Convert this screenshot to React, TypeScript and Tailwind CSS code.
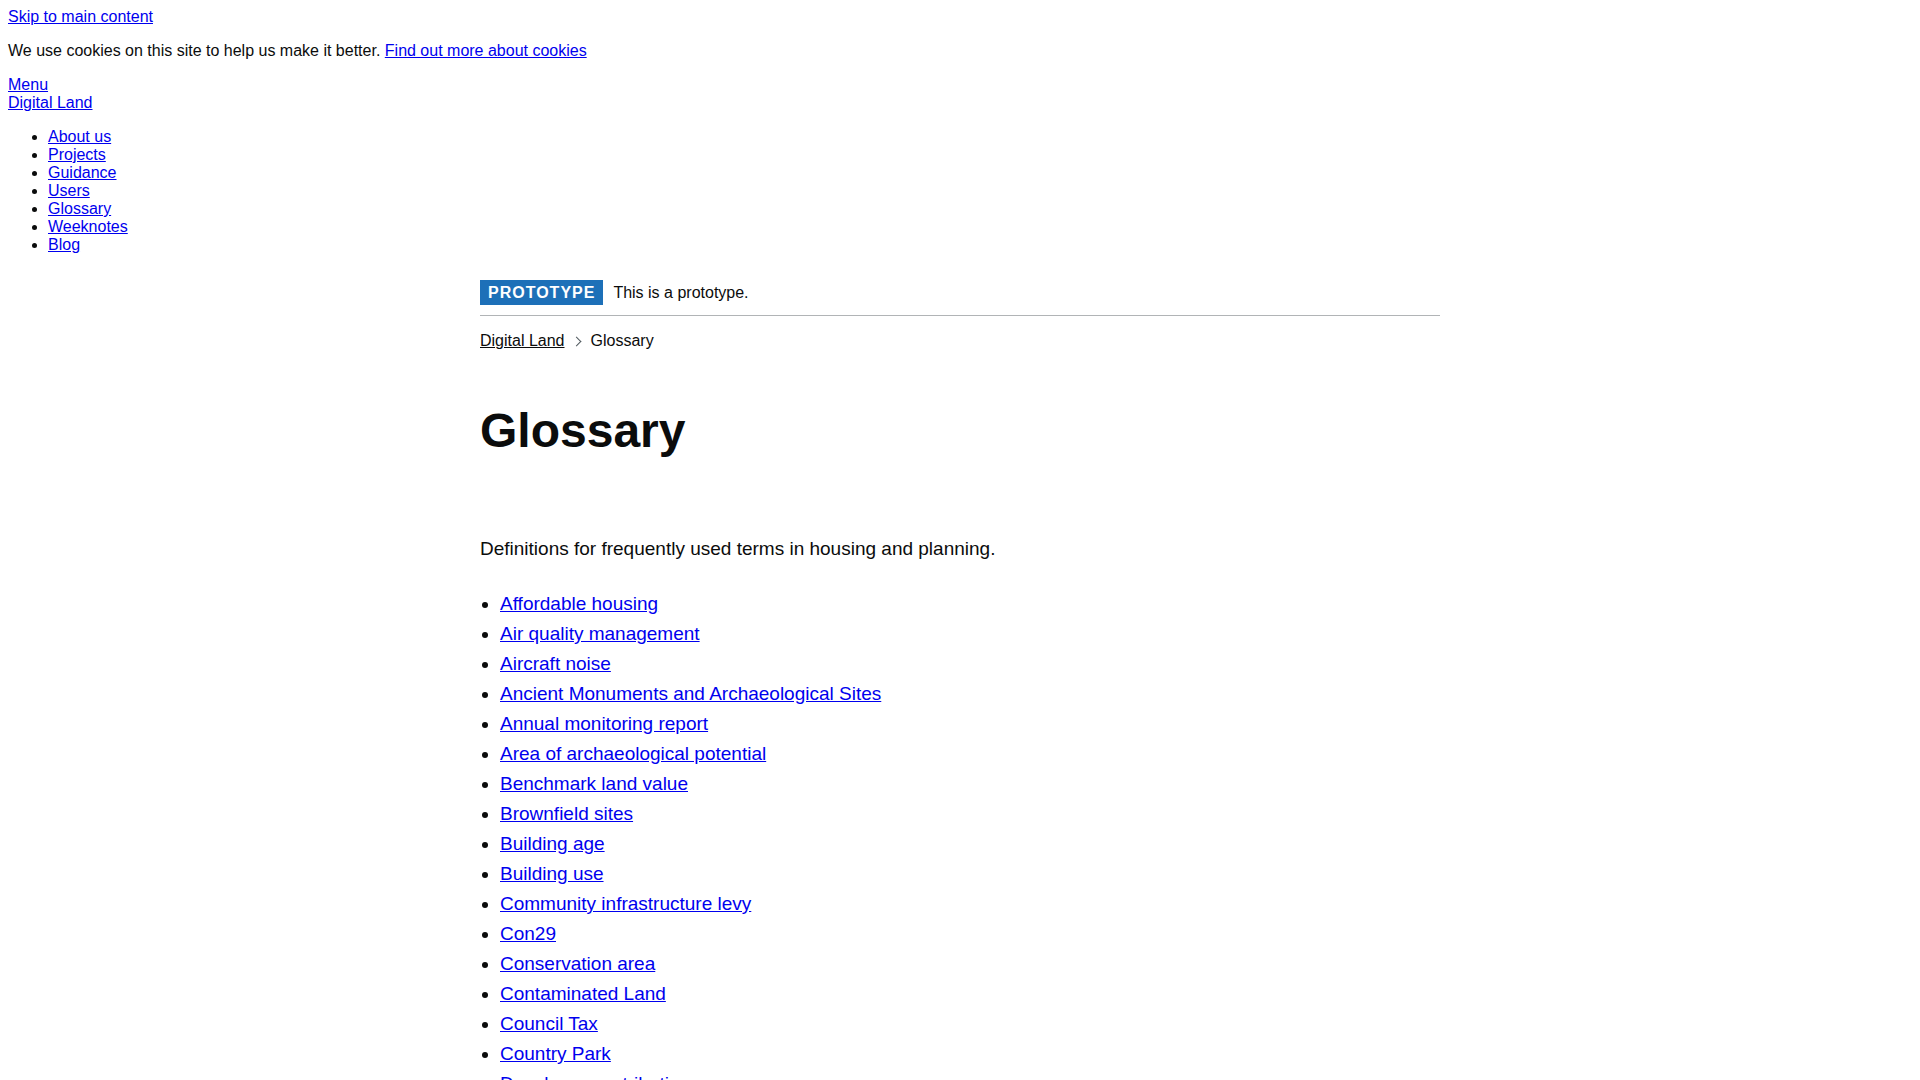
import React from "react";

const navLinks = ["About us", "Projects", "Guidance", "Users", "Glossary", "Weeknotes", "Blog"];

const terms = [
  "Affordable housing",
  "Air quality management",
  "Aircraft noise",
  "Ancient Monuments and Archaeological Sites",
  "Annual monitoring report",
  "Area of archaeological potential",
  "Benchmark land value",
  "Brownfield sites",
  "Building age",
  "Building use",
  "Community infrastructure levy",
  "Con29",
  "Conservation area",
  "Contaminated Land",
  "Council Tax",
  "Country Park",
  "Developer contributions",
  "Development plan",
  "Flood risk zone",
  "Green belt",
];

export default function App() {
  return (
    <div className="min-h-screen bg-white p-2 text-[16px] leading-[18px] text-[#0b0c0c] font-['Liberation_Sans',Arial,sans-serif]">
      {/* Unstyled header bits */}
      <a href="#main" className="text-[#0000ee] underline">
        Skip to main content
      </a>
      <p className="my-4">
        We use cookies on this site to help us make it better.{" "}
        <a href="#cookies" className="text-[#0000ee] underline">
          Find out more about cookies
        </a>
      </p>
      <div>
        <a href="#menu" className="text-[#0000ee] underline">Menu</a>
      </div>
      <div>
        <a href="#home" className="text-[#0000ee] underline">Digital Land</a>
      </div>
      <ul className="my-4 list-disc pl-10">
        {navLinks.map((l) => (
          <li key={l}>
            <a href="#" className="text-[#0000ee] underline">{l}</a>
          </li>
        ))}
      </ul>

      <div className="mx-auto max-w-[960px]">
        {/* Phase banner */}
        <div className="flex items-center border-b border-[#b1b4b6] py-[10px]">
          <strong className="mr-[10px] inline-block bg-[#1d70b8] px-2 pt-[5px] pb-[4px] text-[16px] leading-4 font-bold uppercase tracking-[1px] text-white">
            Prototype
          </strong>
          <span className="leading-5">This is a prototype.</span>
        </div>

        {/* Breadcrumbs */}
        <div className="mt-[15px] flex items-center leading-5">
          <a href="#home" className="text-[#0b0c0c] underline">Digital Land</a>
          <span className="ml-[8px] mr-[11px] inline-block h-[7px] w-[7px] rotate-45 border-t border-r border-[#505a5f]"></span>
          <span>Glossary</span>
        </div>

        <main id="main">
          <h1 className="mt-[55px] text-[48px] leading-[50px] font-bold">Glossary</h1>

          <p className="mt-[80px] text-[19px] leading-[25px]">
            Definitions for frequently used terms in housing and planning.
          </p>

          <ul className="mt-[30px] list-disc pl-5 text-[19px] leading-[25px]">
            {terms.map((t) => (
              <li key={t} className="mb-[5px]">
                <a href="#" className="text-[#0000ee] underline">{t}</a>
              </li>
            ))}
          </ul>
        </main>
      </div>
    </div>
  );
}
